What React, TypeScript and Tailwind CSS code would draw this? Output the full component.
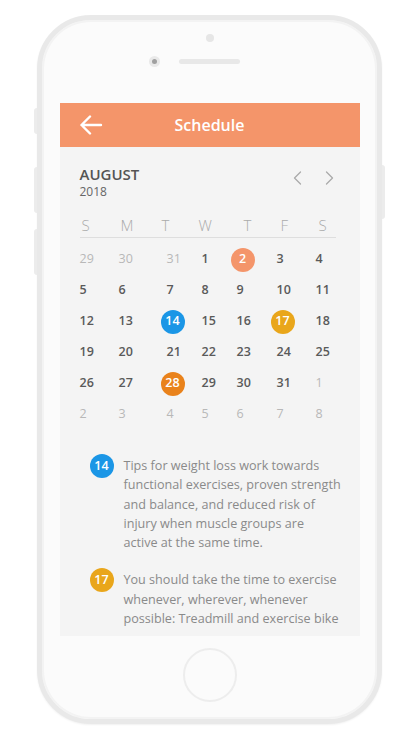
import React from "react";

const font = { fontFamily: '"Open Sans", "Noto Sans", sans-serif' };

type Cell = { n: number; muted?: boolean; circle?: string };

const rows: Cell[][] = [
  [{ n: 29, muted: true }, { n: 30, muted: true }, { n: 31, muted: true }, { n: 1 }, { n: 2, circle: "bg-[#f4956a]" }, { n: 3 }, { n: 4 }],
  [{ n: 5 }, { n: 6 }, { n: 7 }, { n: 8 }, { n: 9 }, { n: 10 }, { n: 11 }],
  [{ n: 12 }, { n: 13 }, { n: 14, circle: "bg-[#1b96e6]" }, { n: 15 }, { n: 16 }, { n: 17, circle: "bg-[#e9a61b]" }, { n: 18 }],
  [{ n: 19 }, { n: 20 }, { n: 21 }, { n: 22 }, { n: 23 }, { n: 24 }, { n: 25 }],
  [{ n: 26 }, { n: 27 }, { n: 28, circle: "bg-[#e9821b]" }, { n: 29 }, { n: 30 }, { n: 31 }, { n: 1, muted: true }],
  [{ n: 2, muted: true }, { n: 3, muted: true }, { n: 4, muted: true }, { n: 5, muted: true }, { n: 6, muted: true }, { n: 7, muted: true }, { n: 8, muted: true }],
];

function DateCell({ c }: { c: Cell }) {
  if (c.circle) {
    return (
      <div className="h-[31px] flex items-center">
        <div className={`-ml-[6px] w-6 h-6 rounded-full ${c.circle} flex items-center justify-center text-white text-[12.5px] font-semibold leading-none`}>
          {c.n}
        </div>
      </div>
    );
  }
  return (
    <div className={`h-[31px] flex items-center text-[12.5px] leading-none ${c.muted ? "text-[#b8b8b8] font-normal" : "text-[#5a5a5a] font-semibold"}`}>
      {c.n}
    </div>
  );
}

export default function App() {
  return (
    <div className="w-[418px] h-[739px] bg-white overflow-hidden relative" style={font}>
      <div className="ml-[37px] mt-[15px] w-[345px] h-[709px] relative">
        {/* side buttons */}
        <div className="absolute -left-[3px] top-[93px] w-[3px] h-[26px] bg-[#ececec] rounded-l" />
        <div className="absolute -left-[3px] top-[152px] w-[3px] h-[46px] bg-[#ececec] rounded-l" />
        <div className="absolute -left-[3px] top-[214px] w-[3px] h-[46px] bg-[#ececec] rounded-l" />
        <div className="absolute -right-[3px] top-[150px] w-[3px] h-[54px] bg-[#ececec] rounded-r" />

        <div className="w-full h-full rounded-[54px] border-[5px] border-[#e9e9e9] bg-[#fbfbfb] shadow-[inset_0_0_0_2px_#f3f3f3,0_1px_2px_rgba(0,0,0,0.06)] flex flex-col items-center">
          {/* sensor */}
          <div className="mt-[14px] w-[8px] h-[8px] rounded-full bg-[#e6e6e6]" />
          {/* camera + speaker */}
          <div className="mt-[14px] flex items-center gap-[19px]">
            <div className="w-[11px] h-[11px] rounded-full bg-[#e9e9e9] flex items-center justify-center">
              <div className="w-[5px] h-[5px] rounded-full bg-[#a0a0a0]" />
            </div>
            <div className="w-[61px] h-[5px] rounded-full bg-[#e8e8e8]" />
            <div className="w-[11px] h-[11px]" />
          </div>

          {/* screen */}
          <div className="mt-[36px] w-[300px] h-[533px] bg-[#f4f4f4] overflow-hidden flex flex-col">
            <div className="h-[44px] bg-[#f4956a] flex items-center relative shrink-0">
              <svg className="absolute left-[19px] top-[12px]" width="24" height="20" viewBox="0 0 24 20" fill="none">
                <path d="M22 10H2.5M11 1.5L2.5 10L11 18.5" stroke="white" strokeWidth="2.4" strokeLinecap="round" strokeLinejoin="round" />
              </svg>
              <div className="w-full text-center text-white text-[16px] font-semibold">Schedule</div>
            </div>

            <div className="px-[20px] pt-[19px]">
              <div className="flex items-start justify-between">
                <div className="flex flex-col">
                  <div className="text-[15px] font-semibold text-[#555] leading-[17px]">AUGUST</div>
                  <div className="mt-[1px] text-[12px] text-[#666] leading-[15px]">2018</div>
                </div>
                <div className="flex items-center gap-[23px] mt-[5px] mr-[6px]">
                  <svg width="9" height="14" viewBox="0 0 9 14" fill="none">
                    <path d="M7.5 1L1.5 7L7.5 13" stroke="#aaa" strokeWidth="1.3" strokeLinecap="round" strokeLinejoin="round" />
                  </svg>
                  <svg width="9" height="14" viewBox="0 0 9 14" fill="none">
                    <path d="M1.5 1L7.5 7L1.5 13" stroke="#aaa" strokeWidth="1.3" strokeLinecap="round" strokeLinejoin="round" />
                  </svg>
                </div>
              </div>

              <div className="mt-[16px] pl-[2px] grid grid-cols-[39px_41px_37px_45px_37px_38px_1fr] text-[15px] font-light text-[#aaa] leading-[20px] w-[256px]">
                {["S", "M", "T", "W", "T", "F", "S"].map((d, i) => (
                  <div key={i}>{d}</div>
                ))}
              </div>
              <div className="mt-[2px] h-px w-[256px] bg-[#dedede]" />

              <div className="mt-[6px] grid grid-cols-[39px_48px_35px_35px_40px_39px_1fr]">
                {rows.map((r, ri) => r.map((c, ci) => <DateCell key={`${ri}-${ci}`} c={c} />))}
              </div>

              <div className="mt-[26px] flex flex-col gap-[18px] text-[12.6px] text-[#8a8a8a] leading-[19.3px]">
                <div className="flex gap-[10px]">
                  <div className="ml-[10px] mt-[-2px] w-6 h-6 shrink-0 rounded-full bg-[#1b96e6] flex items-center justify-center text-white text-[12.5px] font-semibold leading-none">14</div>
                  <div className="whitespace-nowrap">
                    Tips for weight loss work towards<br />
                    functional exercises, proven strength<br />
                    and balance, and reduced risk of<br />
                    injury when muscle groups are<br />
                    active at the same time.
                  </div>
                </div>
                <div className="flex gap-[10px]">
                  <div className="ml-[10px] mt-[-2px] w-6 h-6 shrink-0 rounded-full bg-[#e9a61b] flex items-center justify-center text-white text-[12.5px] font-semibold leading-none">17</div>
                  <div className="whitespace-nowrap">
                    You should take the time to exercise<br />
                    whenever, wherever, whenever<br />
                    possible: Treadmill and exercise bike
                  </div>
                </div>
              </div>
            </div>
          </div>

          {/* home button */}
          <div className="mt-[12px] w-[54px] h-[54px] rounded-full border-2 border-[#ededed]" />
        </div>
      </div>
    </div>
  );
}
